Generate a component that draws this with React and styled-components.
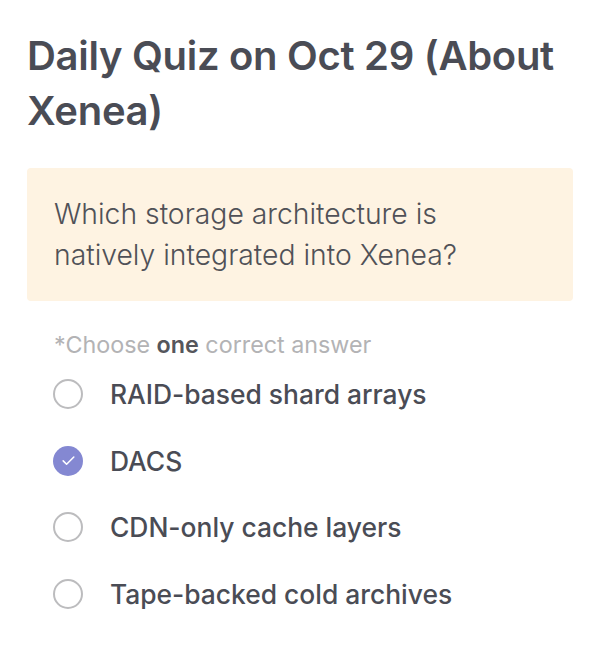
import styled, { createGlobalStyle } from "styled-components";

const GlobalStyle = createGlobalStyle`
  body {
    margin: 0;
    background: #ffffff;
    font-family: Inter, "Noto Sans", sans-serif;
  }
`;

const Page = styled.div`
  padding: 28px 27px 20px;
`;

const Title = styled.h1`
  margin: 0;
  font-size: 40px;
  line-height: 55px;
  font-weight: 600;
  letter-spacing: -0.3px;
  color: #4a4c55;
`;

const QuestionCard = styled.div`
  margin-top: 30px;
  background: #fef3e2;
  border-radius: 4px;
  padding: 26px 27px 25px;
`;

const QuestionText = styled.p`
  margin: 0;
  font-size: 28.3px;
  line-height: 41px;
  font-weight: 300;
  color: #505157;
`;

const Hint = styled.div`
  margin: 31px 0 0 27px;
  font-size: 23.3px;
  line-height: 26px;
  color: #b3b3b5;

  & b {
    font-weight: 600;
    color: #55565c;
  }
`;

const Options = styled.div`
  display: flex;
  flex-direction: column;
  gap: 36.6px;
  margin: 21px 0 0 26px;
`;

const Option = styled.label`
  display: flex;
  align-items: center;
  gap: 27px;
  font-size: 26.4px;
  line-height: 30px;
  font-weight: 500;
  color: #4a4c55;
  cursor: pointer;
`;

const Radio = styled.span`
  box-sizing: border-box;
  width: 30px;
  height: 30px;
  border-radius: 50%;
  flex: none;
  display: flex;
  align-items: center;
  justify-content: center;
  border: ${(p) => (p.$checked ? "none" : "2px solid #bcbcbe")};
  background: ${(p) => (p.$checked ? "#8488d2" : "transparent")};
`;

const options = [
  "RAID-based shard arrays",
  "DACS",
  "CDN-only cache layers",
  "Tape-backed cold archives",
];

export default function App() {
  const selected = 1;
  return (
    <>
      <GlobalStyle />
      <Page>
        <Title>Daily Quiz on Oct 29 (About Xenea)</Title>
        <QuestionCard>
          <QuestionText>
            Which storage architecture is
            <br />
            natively integrated into Xenea?
          </QuestionText>
        </QuestionCard>
        <Hint>
          *Choose <b>one</b> correct answer
        </Hint>
        <Options>
          {options.map((text, i) => (
            <Option key={text}>
              <Radio $checked={i === selected}>
                {i === selected && (
                  <svg width="17" height="17" viewBox="0 0 24 24" fill="none">
                    <path
                      d="M4.5 12.5l4.8 4.8L19.5 7"
                      stroke="#fff"
                      strokeWidth="2.2"
                      strokeLinecap="round"
                      strokeLinejoin="round"
                    />
                  </svg>
                )}
              </Radio>
              {text}
            </Option>
          ))}
        </Options>
      </Page>
    </>
  );
}
